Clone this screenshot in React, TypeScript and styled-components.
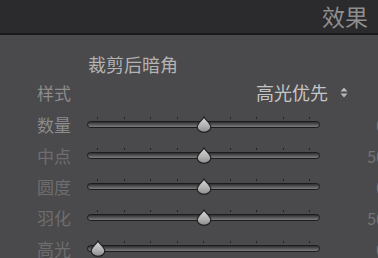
import React from "react";
import styled, { createGlobalStyle } from "styled-components";

const Global = createGlobalStyle`
  html, body { margin: 0; padding: 0; background: #4a494b; }
  body { font-family: "Noto Sans CJK SC", "Noto Sans", sans-serif; }
`;

const Panel = styled.div`
  width: 378px;
  height: 258px;
  overflow: hidden;
  background: #4a494b;
  font-family: "Noto Sans CJK SC", "Noto Sans", sans-serif;
`;

const Header = styled.div`
  height: 33px;
  background: #2b2a2c;
  border-bottom: 2px solid #19181a;
  display: flex;
  align-items: center;
  justify-content: flex-end;
  padding-right: 10px;
  font-size: 23px;
  color: #8e8e8e;
  line-height: 1;
`;

const Body = styled.div`
  padding: 18px 0 0 37px;
  display: flex;
  flex-direction: column;
`;

const SectionTitle = styled.div`
  padding-left: 51px;
  height: 22px;
  line-height: 22px;
  font-size: 18px;
  color: #b3b3b3;
`;

const StyleRow = styled.div`
  height: 34px;
  display: flex;
  align-items: center;
  padding-right: 30px;
`;

const Label = styled.div<{ $bright?: boolean }>`
  width: 50px;
  flex-shrink: 0;
  font-size: 17px;
  line-height: 1;
  color: ${(p) => (p.$bright ? "#8c8c8c" : "#6e6e6e")};
`;

const Dropdown = styled.div`
  margin-left: auto;
  display: flex;
  align-items: center;
  gap: 12px;
  font-size: 18px;
  line-height: 1;
  color: #c6c6c6;
`;

const SliderRow = styled.div`
  height: 31px;
  display: flex;
  align-items: center;
`;

const SliderArea = styled.div`
  position: relative;
  width: 233px;
  height: 18px;
  flex-shrink: 0;
  padding-top: 1px;
  box-sizing: border-box;
  display: flex;
  flex-direction: column;
  gap: 2px;
`;

const Ticks = styled.div`
  height: 2px;
  display: flex;
  justify-content: space-between;
  padding: 0 10px;
`;

const Tick = styled.span`
  width: 1px;
  height: 2px;
  background: #232224;
`;

const Track = styled.div`
  height: 7px;
  box-sizing: border-box;
  border: 1.5px solid #1c1b1d;
  border-radius: 4px;
  background: linear-gradient(#2e2d2f 0%, #5a595b 55%, #7c7b7d 100%);
`;

const Thumb = styled.svg`
  position: absolute;
  top: 0;
  width: 16px;
  height: 17px;
`;

const Value = styled.div`
  width: 65px;
  flex-shrink: 0;
  text-align: right;
  font-size: 16px;
  line-height: 1;
  color: #747474;
`;

const sliders = [
  { label: "数量", value: 50, text: "0", bright: true },
  { label: "中点", value: 50, text: "50" },
  { label: "圆度", value: 50, text: "0" },
  { label: "羽化", value: 50, text: "50" },
  { label: "高光", value: 0, text: "0" },
];

const UpDown = () => (
  <svg width="8" height="11" viewBox="0 0 8 11">
    <path d="M4 0.5 L7.5 4.5 L0.5 4.5 Z" fill="#b8b8b8" />
    <path d="M4 10.5 L7.5 6.5 L0.5 6.5 Z" fill="#b8b8b8" />
  </svg>
);

const ThumbShape = ({ left }: { left: number }) => (
  <Thumb viewBox="0 0 16 17" style={{ left }}>
    <defs>
      <linearGradient id="tg" x1="0" y1="0" x2="0" y2="1">
        <stop offset="0" stopColor="#d8d8d8" />
        <stop offset="0.6" stopColor="#b0b0b0" />
        <stop offset="1" stopColor="#8a8a8a" />
      </linearGradient>
    </defs>
    <path
      d="M8 1 C9.5 4 14.8 7.5 14.8 11 A6.8 5.4 0 0 1 1.2 11 C1.2 7.5 6.5 4 8 1 Z"
      fill="url(#tg)"
      stroke="#1f1e20"
      strokeWidth="1.2"
    />
  </Thumb>
);

export default function App() {
  return (
    <>
      <Global />
      <Panel>
        <Header>效果</Header>
        <Body>
          <SectionTitle>裁剪后暗角</SectionTitle>
          <StyleRow>
            <Label $bright>样式</Label>
            <Dropdown>
              高光优先
              <UpDown />
            </Dropdown>
          </StyleRow>
          {sliders.map((s) => (
            <SliderRow key={s.label}>
              <Label $bright={s.bright}>{s.label}</Label>
              <SliderArea>
                <Ticks>
                  {Array.from({ length: 9 }).map((_, i) => (
                    <Tick key={i} />
                  ))}
                </Ticks>
                <Track />
                <ThumbShape left={10 + (s.value / 100) * 213 - 7.5} />
              </SliderArea>
              <Value>{s.text}</Value>
            </SliderRow>
          ))}
        </Body>
      </Panel>
    </>
  );
}
